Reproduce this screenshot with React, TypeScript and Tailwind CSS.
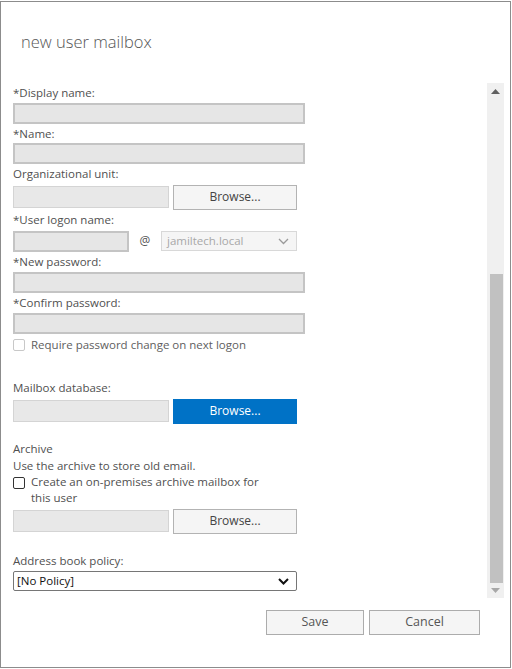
import React from 'react';

const Chevron = ({ className = '', bold = false }: { className?: string; bold?: boolean }) => (
  <svg width="11" height="7" viewBox="0 0 11 7" className={className}>
    <path d="M1 1l4.5 4.5L10 1" fill="none" stroke="currentColor" strokeWidth={bold ? 2 : 1.3} />
  </svg>
);

const Label = ({ children, h = 'h-[20px] leading-[20px]' }: { children: React.ReactNode; h?: string }) => (
  <div className={`${h} text-[11.5px] text-[#505050]`}>{children}</div>
);

const GrayInput = ({ w, strong = true }: { w: string; strong?: boolean }) => (
  <div
    className={`${w} h-[21px] bg-[#e6e6e6] ${strong ? 'border-2 border-[#c4c4c4]' : 'border border-[#d2d2d2]'}`}
  />
);

const BrowseRow = ({ primary = false }: { primary?: boolean }) => (
  <div className="flex items-center gap-[4px] h-[26px]">
    <div className="w-[156px] h-[22px] bg-[#e8e8e8] border border-[#d4d4d4]" />
    <button
      className={
        primary
          ? 'w-[124px] h-[25px] bg-[#0072c6] text-white text-[12px]'
          : 'w-[124px] h-[25px] bg-[#f5f5f5] border border-[#b3b3b3] text-[#444] text-[12px]'
      }
    >
      Browse...
    </button>
  </div>
);

export default function App() {
  return (
    <div className="w-[512px] h-[669px] bg-white pt-px font-['Segoe_UI','Open_Sans',sans-serif] overflow-hidden">
      <div className="w-[511px] h-[667px] border border-[#8c8c8c] flex flex-col">
        {/* header */}
        <div className="h-[81px] pl-[20px] pt-[28px] text-[16.5px] font-light text-[#555]">
          new user mailbox
        </div>

        {/* body */}
        <div className="flex h-[515px]">
          <div className="w-[486px] pl-[12px]">
            <Label>*Display name:</Label>
            <GrayInput w="w-[292px]" />
            <Label h="h-[19px] leading-[19px]">*Name:</Label>
            <GrayInput w="w-[292px]" />
            <Label h="h-[20px] leading-[19px]">Organizational unit:</Label>
            <BrowseRow />
            <Label>*User logon name:</Label>
            <div className="flex items-center h-[22px]">
              <GrayInput w="w-[116px]" />
              <span className="w-[32px] text-center text-[12px] text-[#555]">@</span>
              <div className="w-[136px] h-[20px] bg-[#f5f5f5] border border-[#d8d8d8] flex items-center justify-between pl-[5px] pr-[7px] text-[11.5px] text-[#a8a8a8]">
                <span>jamiltech.local</span>
                <Chevron className="text-[#9a9a9a]" />
              </div>
            </div>
            <Label>*New password:</Label>
            <GrayInput w="w-[292px]" />
            <Label>*Confirm password:</Label>
            <GrayInput w="w-[292px]" />
            <div className="flex items-center h-[16px] mt-[3px] gap-[6px]">
              <div className="w-[12px] h-[12px] rounded-[2px] border border-[#c8c8c8] bg-white" />
              <span className="text-[11.5px] text-[#606060]">Require password change on next logon</span>
            </div>

            <div className="mt-[25px]">
              <Label>Mailbox database:</Label>
            </div>
            <BrowseRow primary />

            <div className="mt-[16px] h-[18px] leading-[18px] text-[11.5px] text-[#505050]">Archive</div>
            <div className="h-[16px] leading-[16px] text-[11.5px] text-[#505050]">Use the archive to store old email.</div>
            <div className="flex gap-[6px]">
              <div className="mt-[3px] w-[12px] h-[12px] rounded-[2px] border border-[#333] bg-white shrink-0" />
              <span className="w-[240px] text-[11.5px] leading-[16px] text-[#505050]">
                Create an on-premises archive mailbox for this user
              </span>
            </div>
            <div className="mt-[2px]">
              <BrowseRow />
            </div>

            <div className="mt-[17px]">
              <Label>Address book policy:</Label>
            </div>
            <div className="w-[284px] h-[20px] bg-white border border-[#767676] rounded-[2px] flex items-center justify-between pl-[3px] pr-[7px] text-[11.5px] text-[#111]">
              <span>[No Policy]</span>
              <Chevron bold className="text-[#111]" />
            </div>
          </div>

          {/* scrollbar */}
          <div className="w-[17px] h-[515px] bg-[#f0f0f0] flex flex-col">
            <div className="h-[17px] flex items-center justify-center">
              <svg width="9" height="5" viewBox="0 0 9 5">
                <path d="M0 5L4.5 0L9 5Z" fill="#606060" />
              </svg>
            </div>
            <div className="h-[174px]" />
            <div className="h-[309px] ml-[3px] w-[13px] bg-[#c1c1c1]" />
            <div className="h-[15px] flex items-center justify-center">
              <svg width="9" height="5" viewBox="0 0 9 5">
                <path d="M0 0L4.5 5L9 0Z" fill="#a8a8a8" />
              </svg>
            </div>
          </div>
        </div>

        {/* footer */}
        <div className="flex justify-end gap-[5px] pr-[30px] pt-[12px]">
          <button className="w-[98px] h-[25px] bg-[#f5f5f5] border border-[#acacac] text-[12.5px] text-[#555]">
            Save
          </button>
          <button className="w-[111px] h-[25px] bg-[#f5f5f5] border border-[#acacac] text-[12.5px] text-[#555]">
            Cancel
          </button>
        </div>
      </div>
    </div>
  );
}
